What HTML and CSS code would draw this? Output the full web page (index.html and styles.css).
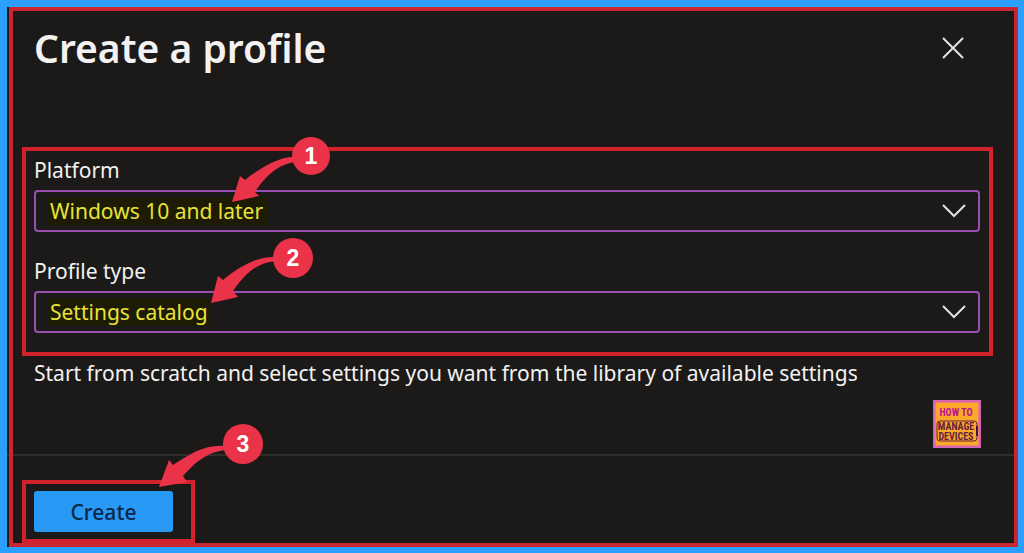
FILE: index.html
```html
<!DOCTYPE html>
<html lang="en">
	<head>
		<meta charset="utf-8">
		<title>Create a profile</title>
		<link rel="stylesheet" href="styles.css">
	</head>
	<body>
		<main class="panel">
			<header class="header">
				<h1 class="title">Create a profile</h1>
				<button class="closeBtn" type="button" aria-label="Close">
					<svg width="24" height="24" viewBox="0 0 24 24"><path d="M2 2L22 22M22 2L2 22"/></svg>
				</button>
			</header>

			<section class="marked">
				<div class="field">
					<label for="platform">Platform</label>
					<div class="selectBox">
						<select id="platform" class="long">
							<option>Windows 10 and later</option>
						</select>
						<svg class="chevron" width="24" height="14" viewBox="0 0 24 14"><path d="M1 1L12 12L23 1"/></svg>
					</div>
					<svg class="step step1" width="102" height="70" viewBox="0 0 102 70">
						<path d="M66 21C48 20 29 33 15 44L10 40L2 66L29 60L25 56C35 41 47 28 66 26Z"/>
						<circle cx="81" cy="20" r="19"/>
						<text x="81" y="28">1</text>
					</svg>
				</div>
				<div class="field">
					<label for="profileType">Profile type</label>
					<div class="selectBox">
						<select id="profileType" class="short">
							<option>Settings catalog</option>
						</select>
						<svg class="chevron" width="24" height="14" viewBox="0 0 24 14"><path d="M1 1L12 12L23 1"/></svg>
					</div>
					<svg class="step step2" width="106" height="70" viewBox="0 0 106 70">
						<path d="M67 21C48 20 30 31 14 44L9 40L2 67L29 61L24 55C36 38 47 27 67 25Z"/>
						<circle cx="84" cy="22" r="20"/>
						<text x="84" y="30">2</text>
					</svg>
				</div>
			</section>

			<p class="desc">Start from scratch and select settings you want from the library of available settings</p>

			<div class="logoRow">
				<svg class="logo" width="48" height="48" viewBox="0 0 48 48" role="img" aria-label="How to manage devices">
					<rect x="1" y="1" width="46" height="46" fill="#fda829" stroke="#d864b4" stroke-width="3"/>
					<text class="logoTop" x="23" y="16">HOW TO</text>
					<rect x="4" y="21" width="40" height="20" rx="3" fill="none" stroke="#64203f" stroke-width="1"/>
					<text class="logoName" x="23" y="30">MANAGE</text>
					<text class="logoName" x="23" y="40">DEVICES</text>
					<path d="M44 26V36" stroke="#3d1450" stroke-width="2"/>
				</svg>
			</div>

			<footer class="footer">
				<div class="markedBtn">
					<button class="createBtn" type="button">Create</button>
					<svg class="step step3" width="106" height="66" viewBox="0 0 106 66">
						<path d="M68 23C47 21 32 31 15 42L11 37L1 64L29 59L25 53C37 40 48 29 68 27Z"/>
						<circle cx="85" cy="21" r="20"/>
						<text x="85" y="29">3</text>
					</svg>
				</div>
			</footer>
		</main>
	</body>
</html>
```
FILE: styles.css
```css
* {
	box-sizing: border-box;
}
body {
	margin: 0;
	padding: 7px 6px 6px 7px;
	min-height: 100vh;
	background-color: #2b9fff;
	color: #f3f2f1;
	font-family: "Noto Sans", "Open Sans", sans-serif;
	font-size: 21px;
	line-height: 30px;
}
.panel {
	position: relative;
	background-color: #1b1a19;
}
/* red frame round the whole panel */
.panel::after {
	content: "";
	position: absolute;
	inset: 0 0 0 2px;
	border: 4px solid #c9262f;
	pointer-events: none;
}

.header {
	display: flex;
	justify-content: space-between;
	align-items: center;
	height: 82px;
	padding: 0 53px 0 27px;
}
.title {
	margin: 0;
	font-size: 39px;
	font-weight: 600;
	line-height: 60px;
}
.closeBtn {
	display: flex;
	padding: 0;
	border: 0;
	background: none;
	cursor: pointer;
}
.closeBtn path,
.chevron path {
	fill: none;
	stroke: #e4e3e2;
	stroke-width: 2;
}

.marked {
	display: grid;
	gap: 24px;
	margin: 58px 25px 0 15px;
	padding: 4px 9px 19px 8px;
	border: 4px solid #d2232c;
}
.field {
	position: relative;
}
.field label {
	display: block;
	margin-bottom: 5px;
}
.selectBox {
	display: grid;
	align-items: center;
}
.selectBox > * {
	grid-area: 1 / 1;
}
select {
	appearance: none;
	width: 100%;
	height: 42px;
	padding: 0 14px;
	border: 2px solid #9a4fb0;
	border-radius: 4px;
	background: #1b1a19 linear-gradient(#1d1b04, #1d1b04) no-repeat 12px center;
	color: #e8e337;
	font: inherit;
}
.long {
	background-size: 220px 28px;
}
.short {
	background-size: 162px 28px;
}
.chevron {
	justify-self: end;
	margin-right: 14px;
	pointer-events: none;
}

/* numbered arrows */
.step {
	position: absolute;
	z-index: 1;
	fill: #ea3349;
	pointer-events: none;
}
.step text {
	fill: #ffffff;
	font-family: "Liberation Sans", Arial, sans-serif;
	font-size: 23px;
	font-weight: bold;
	text-anchor: middle;
}
.step1 {
	left: 196px;
	top: -19px;
}
.step2 {
	left: 175px;
	top: -20px;
}
.step3 {
	left: 132px;
	top: -61px;
}

.desc {
	margin: 2px 27px 0;
}
.logoRow {
	display: flex;
	justify-content: flex-end;
	padding: 12px 37px 6px 0;
}
.logo text {
	font-family: "Roboto Condensed", Roboto, sans-serif;
	font-size: 10px;
	font-weight: bold;
	text-anchor: middle;
}
.logo .logoTop {
	fill: #b51494;
}
.logo .logoName {
	fill: #64203f;
}

.footer {
	padding: 24px 15px 4px;
	border-top: 2px solid #2f2e2d;
}
.markedBtn {
	position: relative;
	width: fit-content;
	padding: 7px 18px 7px 8px;
	border: 4px solid #d2232c;
}
.createBtn {
	display: block;
	width: 139px;
	height: 41px;
	border: 0;
	border-radius: 3px;
	background-color: #2899f5;
	color: #0b2747;
	font: inherit;
	font-weight: 500;
	cursor: pointer;
}
```
